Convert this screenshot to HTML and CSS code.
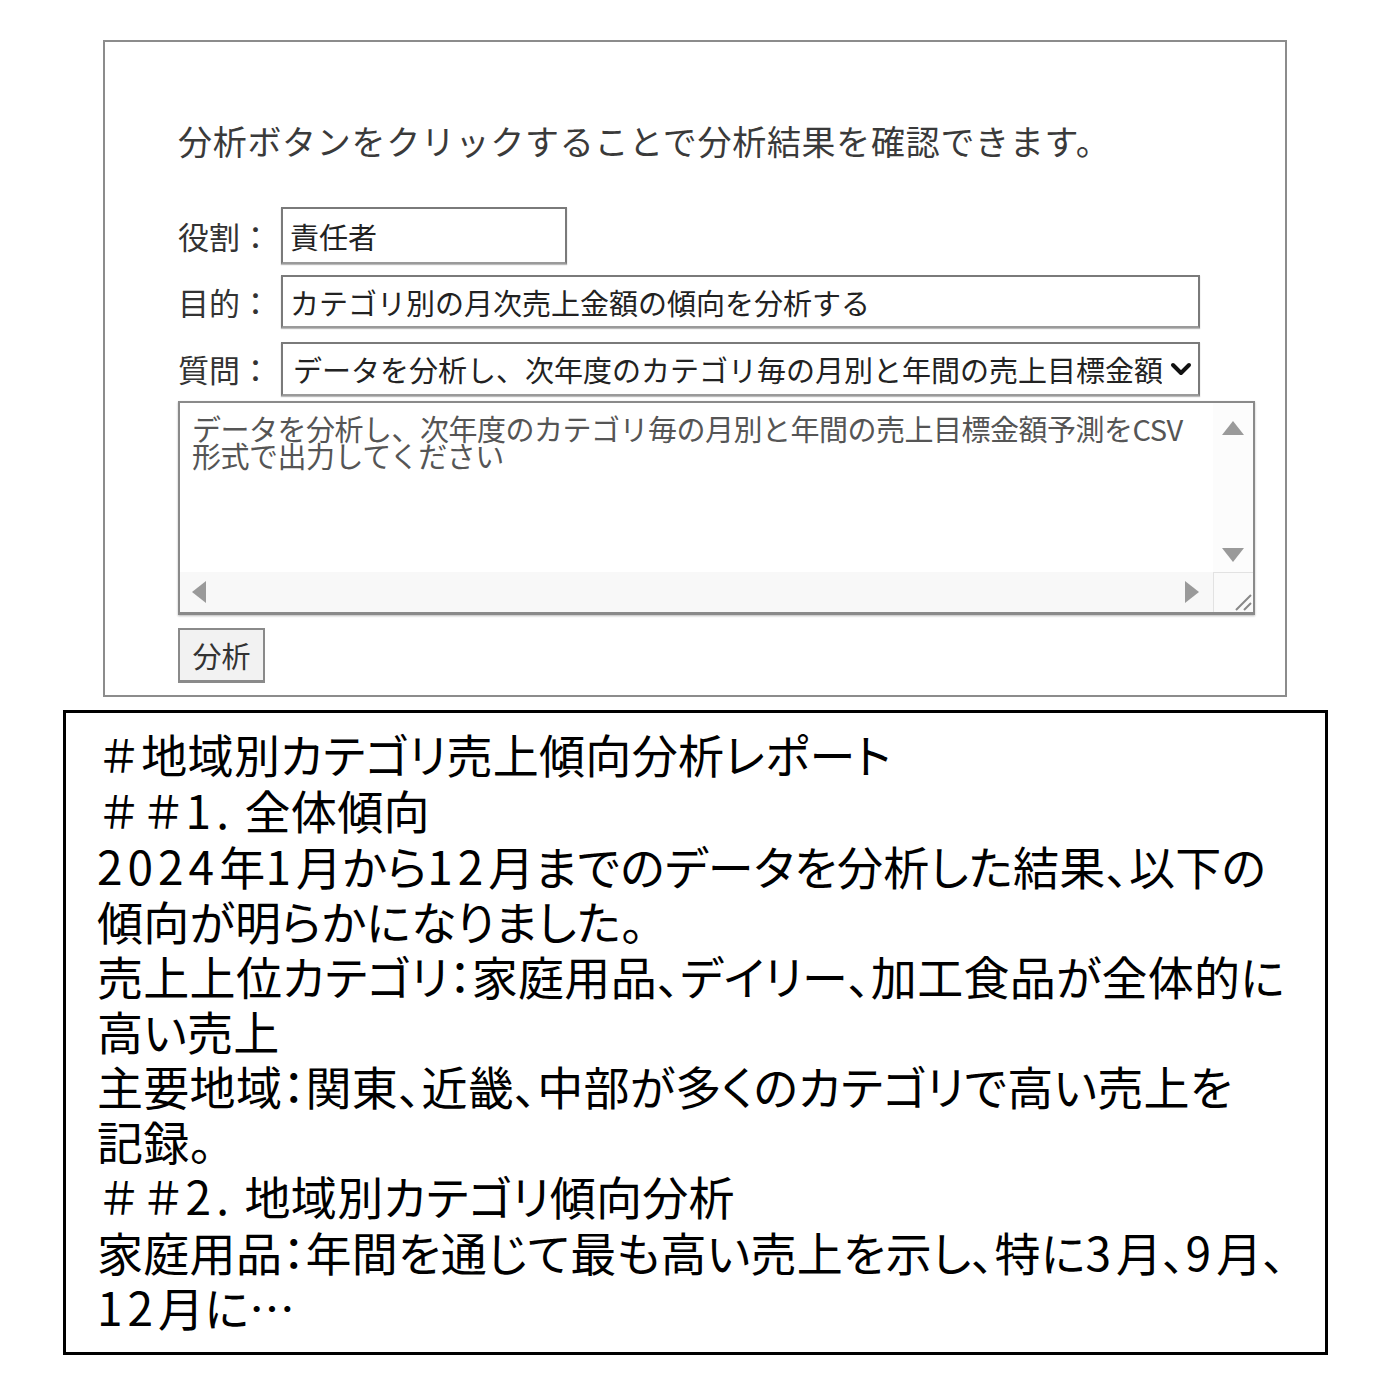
FILE: index.html
```html
<!DOCTYPE html>
<html lang="ja">
<head>
<meta charset="utf-8">
<title>分析</title>
<link rel="stylesheet" href="styles.css">
</head>
<body>
<div class="panel">
  <p class="intro">分析ボタンをクリックすることで分析結果を確認できます。</p>
  <div class="row row-role">
    <label class="label">役割：</label>
    <input class="field field-short" type="text" value="責任者">
  </div>
  <div class="row row-purpose">
    <label class="label">目的：</label>
    <input class="field field-long" type="text" value="カテゴリ別の月次売上金額の傾向を分析する">
  </div>
  <div class="row row-question">
    <label class="label">質問：</label>
    <div class="select-wrap">
      <select class="field field-select">
        <option>データを分析し、次年度のカテゴリ毎の月別と年間の売上目標金額予測をCSV形式で出力してください</option>
      </select>
      <svg class="chevron" width="22" height="16" viewBox="0 0 22 16"><path d="M3 4 L11 12 L19 4" fill="none" stroke="#111" stroke-width="4" stroke-linecap="round" stroke-linejoin="round"/></svg>
    </div>
  </div>
  <div class="textarea">
    <div class="ta-text">データを分析し、次年度のカテゴリ毎の月別と年間の売上目標金額予測をCSV<br>形式で出力してください</div>
    <div class="vscroll">
      <span class="tri tri-up"></span>
      <span class="tri tri-down"></span>
    </div>
    <div class="hscroll">
      <span class="tri tri-left"></span>
      <span class="tri tri-right"></span>
    </div>
    <div class="corner">
      <svg width="40" height="40" viewBox="0 0 40 40"><path d="M22 37 L37 22 M30 37 L37 30" stroke="#888" stroke-width="2" fill="none"/></svg>
    </div>
  </div>
  <button class="btn" type="button">分析</button>
</div>
<div class="report">
  <div class="line"><span class="hash">＃</span>地域別カテゴリ売上傾向分析レポート</div>
  <div class="line"><span class="hash">＃＃</span><span class="num">1.</span> 全体傾向</div>
  <div class="line"><span class="num">2024</span>年<span class="num">1</span>月から<span class="num">12</span>月までのデータを分析した結果、以下の</div>
  <div class="line">傾向が明らかになりました。</div>
  <div class="line">売上上位カテゴリ：家庭用品、デイリー、加工食品が全体的に</div>
  <div class="line">高い売上</div>
  <div class="line">主要地域：関東、近畿、中部が多くのカテゴリで高い売上を</div>
  <div class="line">記録。</div>
  <div class="line"><span class="hash">＃＃</span><span class="num">2.</span> 地域別カテゴリ傾向分析</div>
  <div class="line">家庭用品：年間を通じて最も高い売上を示し、特に<span class="num">3</span>月、<span class="num">9</span>月、</div>
  <div class="line"><span class="num">12</span>月に…</div>
</div>
</body>
</html>
```
FILE: styles.css
```css
* { box-sizing: border-box; }
body {
  margin: 0;
  background: #fff;
  font-family: "Noto Sans CJK JP", "Noto Sans", sans-serif;
}
.panel {
  margin: 40px 0 0 103px;
  width: 1184px;
  height: 657px;
  border: 2px solid #8c8c8c;
  padding: 79px 0 0 73px;
  color: #333;
}
.intro {
  margin: 0;
  font-size: 34px;
  line-height: 40px;
  letter-spacing: 0.7px;
  color: #3a3a3a;
}
.row {
  display: flex;
  align-items: center;
}
.row-role { margin-top: 46px; }
.row-purpose { margin-top: 11px; }
.row-question { margin-top: 14px; }
.label {
  width: 103px;
  flex-shrink: 0;
  font-size: 31px;
  line-height: 40px;
  color: #333;
}
.field {
  font-family: "Noto Sans CJK JP", "Noto Sans", sans-serif;
  font-size: 29px;
  color: #222;
  border: 2px solid #7a7a7a;
  border-bottom-color: #9a9a9a;
  background: #fff;
  padding: 0 7px;
  margin: 0;
  outline: none;
  box-shadow: 0 1px 1px #bbb;
}
.field-short { width: 286px; height: 57px; }
.field-long { width: 919px; height: 53px; }
.select-wrap {
  position: relative;
  width: 919px;
  height: 54px;
}
.field-select {
  -webkit-appearance: none;
  appearance: none;
  width: 919px;
  height: 54px;
  padding: 0 36px 0 10px;
  border-radius: 0;
}
.chevron {
  position: absolute;
  right: 8px;
  top: 19px;
  pointer-events: none;
}
.textarea {
  margin-top: 5px;
  width: 1077px;
  height: 214px;
  border: 2px solid #8a8a8a;
  border-bottom-width: 3px;
  display: grid;
  grid-template-columns: 1fr 40px;
  grid-template-rows: 1fr 40px;
  box-shadow: 0 1px 2px #bbb;
}
.ta-text {
  padding: 12px 10px 0 12px;
  font-size: 29px;
  line-height: 27px;
  color: #555;
  letter-spacing: -0.5px;
  white-space: nowrap;
  overflow: hidden;
}
.vscroll {
  background: #fcfcfc;
  display: flex;
  flex-direction: column;
  justify-content: space-between;
  align-items: center;
  padding: 18px 0 10px;
}
.hscroll {
  background: #f8f8f8;
  display: flex;
  justify-content: space-between;
  align-items: center;
  padding: 0 14px 0 12px;
}
.corner {
  background: #fafafa;
  border-left: 1px solid #e2e2e2;
  border-top: 1px solid #e2e2e2;
}
.corner svg { display: block; }
.tri {
  display: block;
  width: 0;
  height: 0;
  border-style: solid;
}
.tri-up { border-width: 0 11px 14px 11px; border-color: transparent transparent #9a9a9a transparent; }
.tri-down { border-width: 14px 11px 0 11px; border-color: #9a9a9a transparent transparent transparent; }
.tri-left { border-width: 11px 14px 11px 0; border-color: transparent #9a9a9a transparent transparent; }
.tri-right { border-width: 11px 0 11px 14px; border-color: transparent transparent transparent #9a9a9a; }
.btn {
  display: block;
  margin-top: 13px;
  width: 87px;
  height: 55px;
  border: 2px solid #8a8a8a;
  border-bottom-width: 3px;
  background: #f2f2f2;
  font-family: "Noto Sans CJK JP", "Noto Sans", sans-serif;
  font-size: 29px;
  color: #333;
  padding: 0;
  border-radius: 0;
}
.report {
  margin: 13px 0 0 63px;
  width: 1265px;
  height: 645px;
  border: 3px solid #000;
  padding: 13px 0 0 31px;
  color: #000;
  font-size: 46px;
  line-height: 55px;
  letter-spacing: 0.3px;
  font-feature-settings: "palt";
}
.line { white-space: nowrap; }
.num { letter-spacing: 5px; }
.hash { font-feature-settings: normal; font-size: 44px; }
```
